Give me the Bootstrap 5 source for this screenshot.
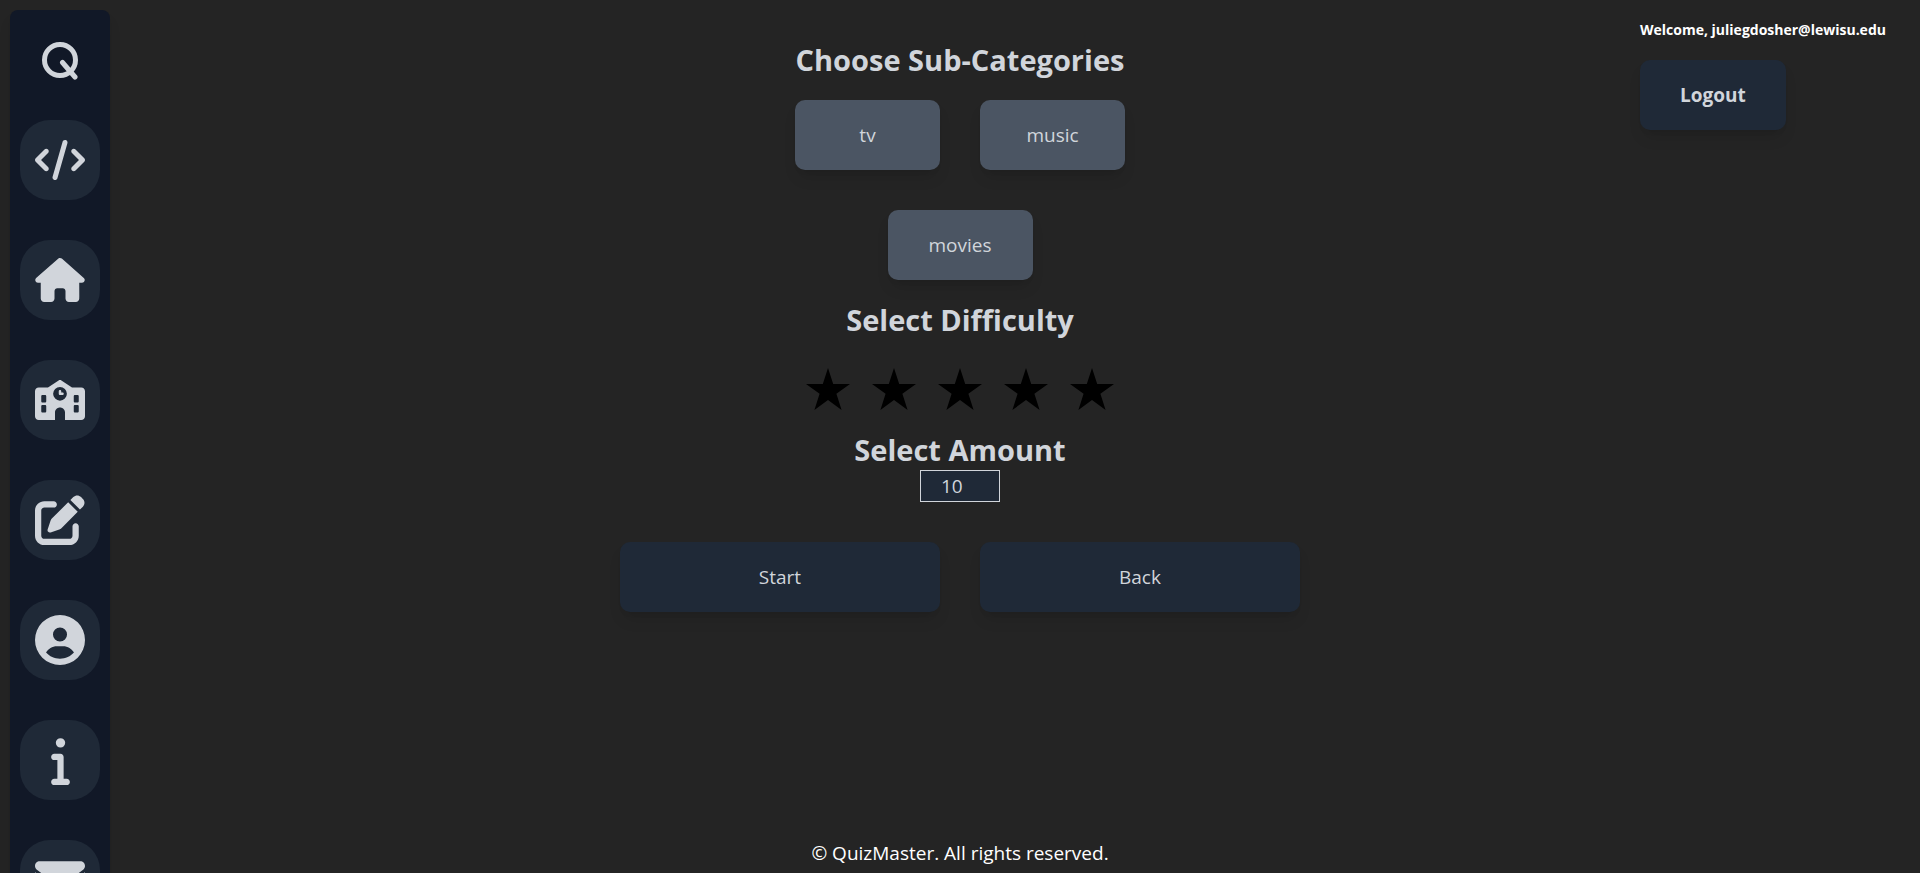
<!DOCTYPE html>
<html lang="en">
<head>
<meta charset="utf-8">
<meta name="viewport" content="width=device-width, initial-scale=1">
<title>QuizMaster</title>
<link href="https://cdn.jsdelivr.net/npm/bootstrap@5.3.0/dist/css/bootstrap.min.css" rel="stylesheet">
<style>
  body { background: #242424; color: #fff; font-family: "Open Sans", "Noto Sans", sans-serif; font-size: 19px; line-height: 30px; }
  .page-grid { display: grid; grid-template-columns: minmax(110px, 1fr) minmax(0, 700px) minmax(280px, 1fr); grid-template-rows: minmax(0, 1fr); }
  .side-nav { width: 100px; margin: 10px 0 0 10px; padding: 10px 10px 40px; gap: 40px; background: #111827; border-radius: 8px; box-shadow: 0 10px 15px -3px rgba(0,0,0,.1), 0 4px 6px -4px rgba(0,0,0,.1); }
  .side-nav a { color: #d1d5db; }
  .side-logo { height: 60px; }
  .side-item { width: 80px; height: 80px; background: #1f2937; border-radius: 30px; }
  .quiz-main { padding-top: 40px; }
  .quiz-title { font-size: 29px; line-height: 40px; font-weight: 700; color: #d1d5db; margin: 0; }
  .quiz-btn { --bs-btn-color: #d1d5db; --bs-btn-bg: #1f2937; --bs-btn-hover-color: #fff; --bs-btn-hover-bg: #374151; --bs-btn-border-width: 0; --bs-btn-padding-x: 40px; --bs-btn-padding-y: 20px; --bs-btn-font-size: 19px; --bs-btn-line-height: 30px; --bs-btn-border-radius: 10px; box-shadow: 0 10px 15px -3px rgba(0,0,0,.1), 0 4px 6px -4px rgba(0,0,0,.1); }
  .quiz-topic { --bs-btn-bg: #4b5563; width: 145px; }
  .topic-list { width: 330px; margin-top: 20px; margin-bottom: 20px; gap: 40px; }
  .star-row { height: 90px; gap: 22px; padding-top: 8px; }
  .star-row label { width: 44px; height: 42px; color: #000; line-height: 0; cursor: pointer; }
  .amount-box { width: 80px; height: 32px; padding: 0 20px; font-size: 19px; line-height: 30px; color: #d1d5db; background: #1f2937; border: 1px solid #d1d5db; border-radius: 0; appearance: textfield; }
  .action-row { margin-top: 40px; gap: 40px; }
  .action-row .btn { width: 320px; }
  .user-box { width: 280px; padding-top: 15px; }
  .user-name { font-size: 14px; line-height: 30px; margin-bottom: 15px; font-weight: 700; }
  .page-foot { padding-bottom: 5px; }
</style>
</head>
<body>
<div class="page-grid vh-100 overflow-hidden">
  <div class="overflow-hidden">
    <nav class="side-nav d-flex flex-column align-items-center" aria-label="Main">
      <a href="#" class="side-logo d-flex align-items-center" aria-label="QuizMaster">
        <svg width="50" height="60" viewBox="0 0 50 60" fill="none" stroke="currentColor" stroke-width="5" stroke-linecap="round"><circle cx="25" cy="40" r="15.5"/><path d="M27.500 42.500 40 57"/></svg>
      </a>
      <a href="#" class="side-item d-flex align-items-center justify-content-center" aria-label="Code">
        <svg viewBox="0 0 640 512" width="50" height="40" fill="currentColor"><path d="M392.8 1.2c-17-4.900-34.700 5-39.600 22l-128 448c-4.900 17 5 34.700 22 39.600s34.700-5 39.600-22l128-448c4.900-17-5-34.700-22-39.600zm80.600 120.100c-12.500 12.500-12.500 32.800 0 45.300L562.700 256l-89.400 89.400c-12.500 12.500-12.500 32.800 0 45.300s32.800 12.500 45.300 0l112-112c12.500-12.500 12.500-32.800 0-45.300l-112-112c-12.500-12.500-32.800-12.500-45.300 0zm-306.700 0c-12.500-12.500-32.800-12.500-45.300 0l-112 112c-12.500 12.500-12.500 32.800 0 45.300l112 112c12.500 12.500 32.800 12.500 45.300 0s12.500-32.800 0-45.300L77.300 256l89.400-89.400c12.500-12.500 12.500-32.800 0-45.300z"/></svg>
      </a>
      <a href="#" class="side-item d-flex align-items-center justify-content-center" aria-label="Home">
        <svg viewBox="0 0 576 512" width="50" height="44" fill="currentColor"><path d="M575.8 255.5c0 18-15 32.1-32 32.1h-32l.7 160.2c0 2.700-.2 5.400-.5 8.100V472c0 22.100-17.900 40-40 40H392c-22.100 0-40-17.900-40-40V384c0-17.700-14.300-32-32-32H256c-17.700 0-32 14.300-32 32v88c0 22.100-17.900 40-40 40H104c-22.100 0-40-17.900-40-40V287.600H32c-18 0-32-14-32-32.100c0-9 3-17 10-24L266.400 8c7-7 15-8 22-8s15 2 21 7L564.800 231.500c8 7 12 15 11 24z"/></svg>
      </a>
      <a href="#" class="side-item d-flex align-items-center justify-content-center" aria-label="School">
        <svg viewBox="0 0 640 512" width="50" height="40" fill="currentColor" fill-rule="evenodd"><path d="M337.8 5.4C327-1.8 313-1.8 302.2 5.4L166.3 96H48C21.5 96 0 117.5 0 144V464c0 26.5 21.5 48 48 48H256V416c0-35.3 28.7-64 64-64s64 28.7 64 64v96H592c26.5 0 48-21.5 48-48V144c0-26.5-21.5-48-48-48H473.7L337.8 5.4zM96 192h32c8.8 0 16 7.2 16 16v64c0 8.8-7.2 16-16 16H96c-8.8 0-16-7.2-16-16V208c0-8.8 7.2-16 16-16zM512 192h32c8.8 0 16 7.2 16 16v64c0 8.8-7.2 16-16 16H512c-8.8 0-16-7.2-16-16V208c0-8.8 7.2-16 16-16zM96 320h32c8.8 0 16 7.2 16 16v64c0 8.8-7.2 16-16 16H96c-8.8 0-16-7.2-16-16V336c0-8.8 7.2-16 16-16zM512 320h32c8.8 0 16 7.2 16 16v64c0 8.8-7.2 16-16 16H512c-8.8 0-16-7.2-16-16V336c0-8.8 7.2-16 16-16zM232 176a88 88 0 1 1 176 0 88 88 0 1 1 -176 0zM320 128c-8.8 0-16 7.2-16 16v32c0 8.8 7.2 16 16 16h32c8.8 0 16-7.2 16-16s-7.2-16-16-16H336V144c0-8.8-7.2-16-16-16z"/></svg>
      </a>
      <a href="#" class="side-item d-flex align-items-center justify-content-center" aria-label="Create quiz">
        <svg viewBox="0 0 512 512" width="50" height="50" fill="currentColor"><path d="M471.6 21.7c-21.9-21.9-57.3-21.9-79.2 0L362.3 51.7l97.9 97.9 30.1-30.1c21.9-21.9 21.9-57.3 0-79.2L471.6 21.7zm-299.2 220c-6.1 6.1-10.8 13.6-13.5 21.9l-29.6 88.8c-2.9 8.6-.6 18.1 5.8 24.6s15.9 8.7 24.6 5.8l88.8-29.6c8.2-2.7 15.7-7.4 21.9-13.5L437.7 172.3 339.7 74.3 172.4 241.7zM96 64C43 64 0 107 0 160V416c0 53 43 96 96 96H352c53 0 96-43 96-96V320c0-17.7-14.3-32-32-32s-32 14.3-32 32v96c0 17.7-14.3 32-32 32H96c-17.7 0-32-14.3-32-32V160c0-17.7 14.3-32 32-32h96c17.7 0 32-14.3 32-32s-14.3-32-32-32H96z"/></svg>
      </a>
      <a href="#" class="side-item d-flex align-items-center justify-content-center" aria-label="Profile">
        <svg viewBox="0 0 512 512" width="50" height="50" fill="currentColor" fill-rule="evenodd"><path d="M399 384.2C376.9 345.8 335.4 320 288 320H224c-47.4 0-88.9 25.8-111 64.2c35.2 39.2 86.2 63.8 143 63.8s107.8-24.7 143-63.8zM0 256a256 256 0 1 1 512 0A256 256 0 1 1 0 256zm256 16a72 72 0 1 0 0-144 72 72 0 1 0 0 144z"/></svg>
      </a>
      <a href="#" class="side-item d-flex align-items-center justify-content-center" aria-label="About">
        <svg viewBox="0 0 192 512" width="19" height="50" fill="currentColor"><path d="M48 80a48 48 0 1 1 96 0A48 48 0 1 1 48 80zM0 224c0-17.7 14.3-32 32-32H96c17.7 0 32 14.3 32 32V448h32c17.7 0 32 14.3 32 32s-14.3 32-32 32H32c-17.7 0-32-14.3-32-32s14.3-32 32-32H64V256H32c-17.7 0-32-14.3-32-32z"/></svg>
      </a>
      <a href="#" class="side-item d-flex align-items-center justify-content-center" aria-label="Contact">
        <svg viewBox="0 0 512 512" width="50" height="50" fill="currentColor"><path d="M48 64C21.5 64 0 85.5 0 112c0 15.1 7.1 29.3 19.2 38.4L236.8 313.6c11.4 8.5 27 8.5 38.4 0L492.8 150.4c12.1-9.1 19.2-23.3 19.2-38.4c0-26.5-21.5-48-48-48H48zM0 176V384c0 35.3 28.7 64 64 64H448c35.3 0 64-28.7 64-64V176L294.4 339.2c-22.800 17.100-54 17.100-76.800 0L0 176z"/></svg>
      </a>
    </nav>
  </div>

  <div class="d-flex flex-column align-items-center">
    <main class="quiz-main d-flex flex-column align-items-center w-100">
      <h1 class="quiz-title">Choose Sub-Categories</h1>
      <div class="topic-list d-flex flex-wrap justify-content-center">
        <button type="button" class="btn quiz-btn quiz-topic">tv</button>
        <button type="button" class="btn quiz-btn quiz-topic">music</button>
        <button type="button" class="btn quiz-btn quiz-topic">movies</button>
      </div>
      <h2 class="quiz-title" id="difficulty">Select Difficulty</h2>
      <div class="star-row d-flex align-items-center" role="radiogroup" aria-labelledby="difficulty">
        <input class="visually-hidden" type="radio" name="stars" id="s1"><label for="s1" aria-label="1 star"><svg width="44" height="42" viewBox="0 0 44 42"><path d="M22 0 27.200 16H44L30.400 25.800 35.600 42 22 32 8.400 42 13.600 25.800 0 16H16.800z"/></svg></label>
        <input class="visually-hidden" type="radio" name="stars" id="s2"><label for="s2" aria-label="2 stars"><svg width="44" height="42" viewBox="0 0 44 42"><path d="M22 0 27.200 16H44L30.400 25.800 35.600 42 22 32 8.400 42 13.600 25.800 0 16H16.800z"/></svg></label>
        <input class="visually-hidden" type="radio" name="stars" id="s3"><label for="s3" aria-label="3 stars"><svg width="44" height="42" viewBox="0 0 44 42"><path d="M22 0 27.200 16H44L30.400 25.800 35.600 42 22 32 8.400 42 13.600 25.800 0 16H16.800z"/></svg></label>
        <input class="visually-hidden" type="radio" name="stars" id="s4"><label for="s4" aria-label="4 stars"><svg width="44" height="42" viewBox="0 0 44 42"><path d="M22 0 27.200 16H44L30.400 25.800 35.600 42 22 32 8.400 42 13.600 25.800 0 16H16.800z"/></svg></label>
        <input class="visually-hidden" type="radio" name="stars" id="s5"><label for="s5" aria-label="5 stars"><svg width="44" height="42" viewBox="0 0 44 42"><path d="M22 0 27.200 16H44L30.400 25.800 35.600 42 22 32 8.400 42 13.600 25.800 0 16H16.800z"/></svg></label>
      </div>
      <label class="quiz-title" for="amount">Select Amount</label>
      <input class="amount-box" type="number" id="amount" value="10" min="1">
      <div class="action-row d-flex flex-wrap justify-content-center">
        <button type="button" class="btn quiz-btn">Start</button>
        <button type="button" class="btn quiz-btn">Back</button>
      </div>
    </main>
    <footer class="page-foot mt-auto">© QuizMaster. All rights reserved.</footer>
  </div>

  <aside class="user-box ms-auto">
    <p class="user-name">Welcome, juliegdosher@lewisu.edu</p>
    <button type="button" class="btn quiz-btn fw-bold">Logout</button>
  </aside>
</div>
<script src="https://cdn.jsdelivr.net/npm/bootstrap@5.3.0/dist/js/bootstrap.bundle.min.js"></script>
</body>
</html>
